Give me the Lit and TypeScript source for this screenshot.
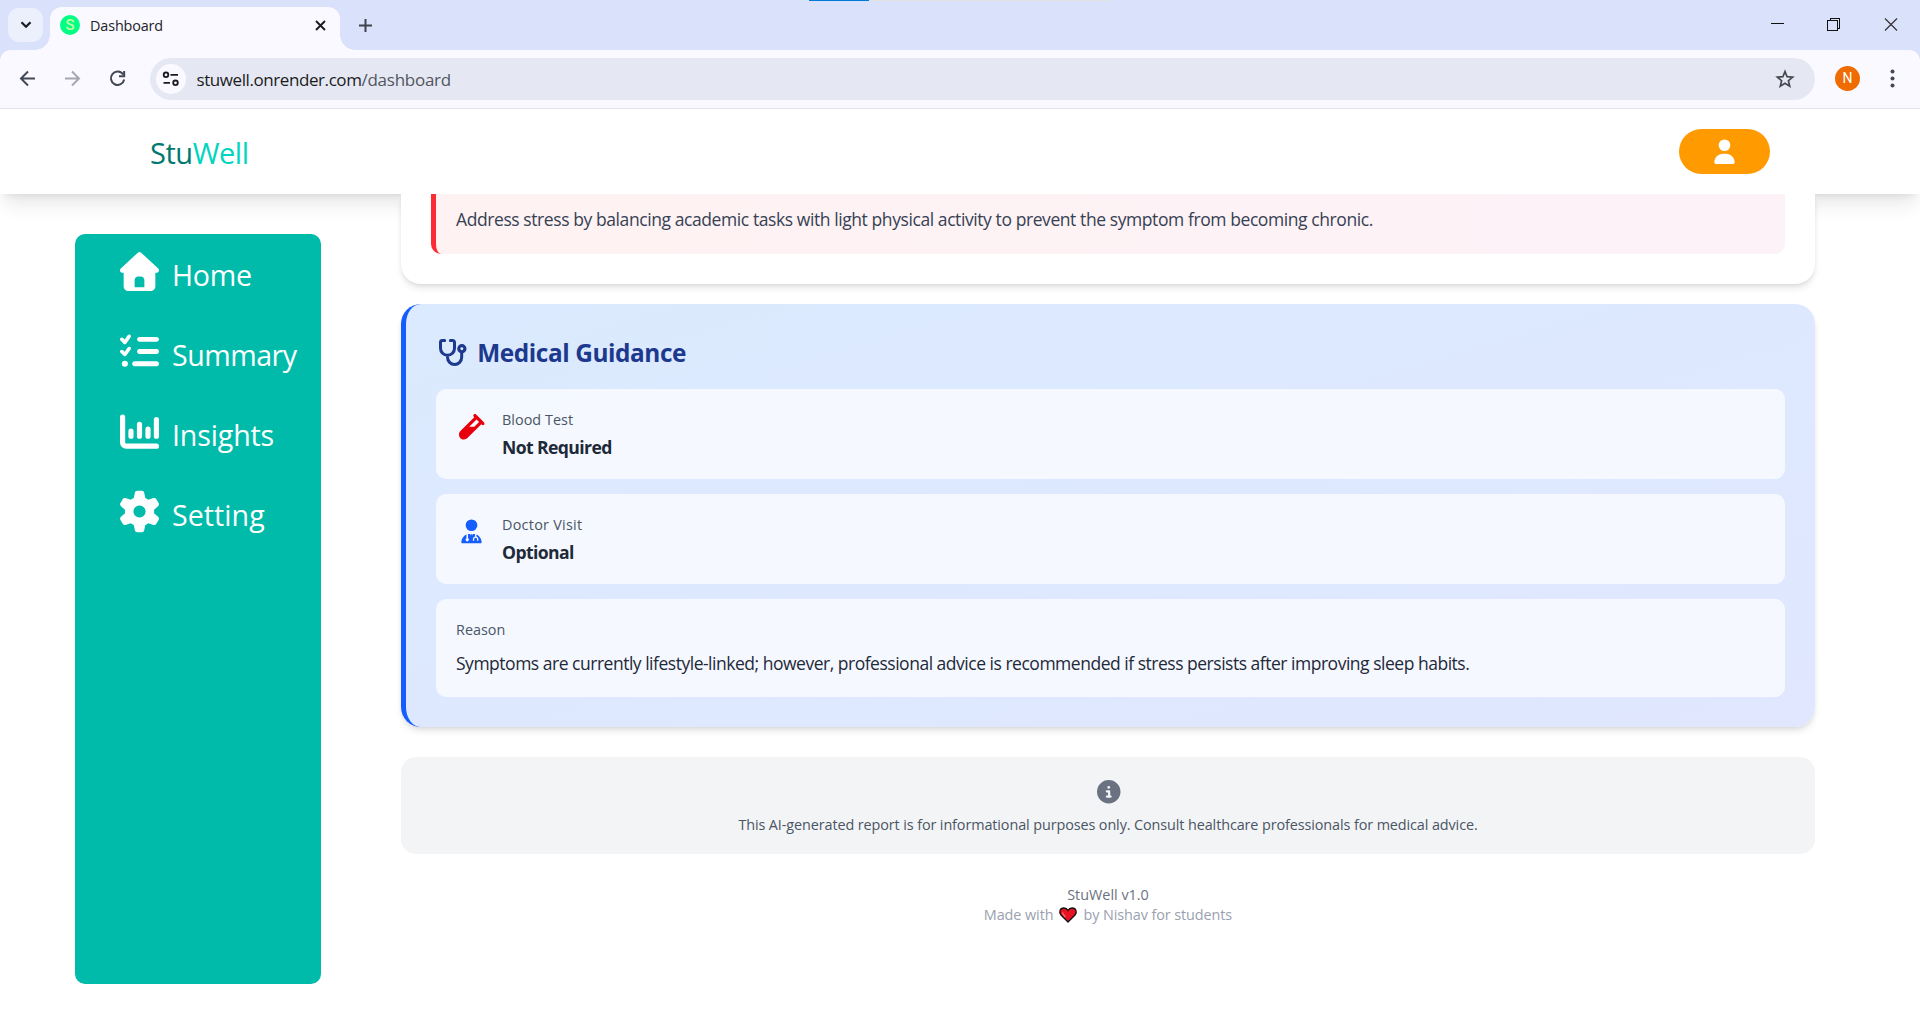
import { LitElement, html, css, svg } from "lit";
import { customElement } from "lit/decorators.js";

const house = svg`<path d="M277.8 8.6c-12.3-11.4-31.3-11.4-43.5 0l-224 208c-9.6 9-12.8 22.9-8 35.1S18.8 272 32 272l16 0 0 176c0 35.3 28.7 64 64 64l288 0c35.3 0 64-28.7 64-64l0-176 16 0c13.2 0 25-8.1 29.8-20.3s1.6-26.2-8-35.1l-224-208zM240 320l32 0c26.5 0 48 21.5 48 48l0 96-128 0 0-96c0-26.5 21.5-48 48-48z"/>`;
const list = svg`<path d="M133.8 36.3c10.9 7.6 13.5 22.6 5.9 33.4l-56 80c-4.1 5.8-10.5 9.5-17.6 10.1S52 158 47 153L7 113C-2.3 103.6-2.3 88.4 7 79S31.6 69.7 41 79l19.8 19.8 39.6-56.6c7.6-10.9 22.6-13.5 33.4-5.9zm0 160c10.9 7.6 13.5 22.6 5.9 33.4l-56 80c-4.1 5.8-10.5 9.5-17.6 10.1S52 318 47 313L7 273c-9.4-9.4-9.4-24.6 0-33.9s24.6-9.4 33.9 0l19.8 19.8 39.6-56.6c7.6-10.9 22.6-13.5 33.4-5.9zM224 96c0-17.7 14.3-32 32-32l224 0c17.7 0 32 14.3 32 32s-14.3 32-32 32l-224 0c-17.7 0-32-14.3-32-32zm0 160c0-17.7 14.3-32 32-32l224 0c17.7 0 32 14.3 32 32s-14.3 32-32 32l-224 0c-17.7 0-32-14.3-32-32zM160 416c0-17.7 14.3-32 32-32l288 0c17.7 0 32 14.3 32 32s-14.3 32-32 32l-288 0c-17.7 0-32-14.3-32-32zM64 376a40 40 0 1 1 0 80 40 40 0 1 1 0-80z"/>`;
const chart = svg`<path fill="none" stroke="currentColor" stroke-width="68" stroke-linecap="round" d="M34 66V400a48 48 0 0 0 48 48H478M144 252V318M256 162V318M368 224V318M478 98V318"/>`;
const gear = svg`<path d="M195.1 9.5C198.1-5.3 211.2-16 226.4-16l59.8 0c15.2 0 28.3 10.7 31.3 25.5L332 79.5c14.1 6 27.3 13.7 39.3 22.8l67.8-22.5c14.4-4.8 30.2 1.2 37.8 14.4l29.9 51.8c7.6 13.2 4.9 29.8-6.5 39.9L447 233.3c.9 7.4 1.3 15 1.3 22.7s-.5 15.3-1.3 22.7l53.4 47.5c11.4 10.1 14 26.8 6.5 39.9l-29.9 51.8c-7.6 13.1-23.4 19.2-37.8 14.4l-67.8-22.5c-12.1 9.1-25.3 16.7-39.3 22.8l-14.4 69.9c-3.1 14.9-16.2 25.5-31.3 25.5l-59.8 0c-15.2 0-28.3-10.7-31.3-25.5l-14.4-69.9c-14.1-6-27.2-13.7-39.3-22.8L73.5 432.3c-14.4 4.8-30.2-1.2-37.8-14.4L5.8 366.1c-7.6-13.2-4.9-29.8 6.5-39.9l53.4-47.5c-.9-7.4-1.3-15-1.3-22.7s.5-15.3 1.3-22.7L12.3 185.8c-11.4-10.1-14-26.8-6.5-39.9L35.7 94.1c7.6-13.2 23.4-19.2 37.8-14.4l67.8 22.5c12.1-9.1 25.3-16.7 39.3-22.8L195.1 9.5zM256.3 336a80 80 0 1 0 -.6-160 80 80 0 1 0 .6 160z"/>`;

const menu = [
  { label: "Home", icon: house, cls: "home" },
  { label: "Summary", icon: list, cls: "summary" },
  { label: "Insights", icon: chart, cls: "insights" },
  { label: "Setting", icon: gear, cls: "setting" },
];

@customElement("app-root")
export class AppRoot extends LitElement {
  static styles = css`
    :host { display: block; width: 1920px; height: 1028px; overflow: hidden; background: #fff;
      font-family: "Open Sans", "Noto Sans", sans-serif; }
    * { box-sizing: border-box; }
    svg { display: block; overflow: visible; flex: none; }
    .t { white-space: pre; }
    .strip { height: 50px; background: #dae1fa; display: flex; position: relative; }
    .chip { width: 35px; height: 34px; margin: 8px 7px 0 8px; border-radius: 11px; background: #ecf0fd; display: grid; place-items: center; }
    .tab { width: 290px; height: 43px; margin-top: 7px; padding: 0 14.5px 7px 10px; border-radius: 12px 12px 0 0; background: #faf9ff; position: relative; display: flex; align-items: center; }
    .tab::before, .tab::after { content: ""; position: absolute; bottom: 0; width: 15px; height: 15px; }
    .tab::before { left: -15px; background: radial-gradient(circle at 0 0, transparent 14.5px, #faf9ff 15px); }
    .tab::after { right: -15px; background: radial-gradient(circle at 100% 0, transparent 14.5px, #faf9ff 15px); }
    .fav { width: 20px; height: 20px; border-radius: 50%; background: #00ff84; color: #c4ff9e; display: grid; place-items: center; font: 500 15px/20px "Roboto", sans-serif; }
    .tabname { margin-left: 10px; padding-top: 1px; font-size: 14.4px; line-height: 20px; letter-spacing: -.14px; color: #22232a; flex: 1; }
    .plus { margin: 19px 0 0 19px; }
    .progress { position: absolute; left: 809px; top: 0; width: 301px; height: 1px; background: #e3e3e6; }
    .progress i { display: block; width: 60px; height: 1px; background: #0078d7; }
    .win { margin-left: auto; display: flex; }
    .bar { height: 59px; padding: 8px 20px 0 0; background: #faf9ff; border-bottom: 1px solid #e1e3ed; display: flex; align-items: flex-start; position: relative; }
    .bar::before, .bar::after { content: ""; position: absolute; top: 0; width: 10px; height: 10px; }
    .bar::before { left: 0; background: radial-gradient(circle at 100% 100%, transparent 9.5px, #dae1fa 10px); }
    .bar::after { right: 0; background: radial-gradient(circle at 0 100%, transparent 9.5px, #dae1fa 10px); }
    .nav { width: 150px; height: 42px; }
    .omni { width: 1665px; height: 42px; padding: 0 20px 0 6px; border-radius: 21px; background: #e5e8f3; display: flex; align-items: center; }
    .site { width: 30px; height: 30px; border-radius: 50%; background: #faf9ff; margin-right: 10.5px; }
    .url { flex: 1; display: flex; font-size: 17px; line-height: 24px; letter-spacing: -.42px; color: #1b1c22; padding-top: 1px; }
    .path { color: #52555e; letter-spacing: -.26px; }
    .avatar { width: 25px; height: 25px; margin: 8px 0 0 20px; border-radius: 50%; background: #ee6c02; color: #fff; font: 400 14px/25px "Roboto", sans-serif; text-align: center; }
    .dots { margin: 8px 0 0 28px; }
    .head { height: 85px; padding: 3px 150px 0 150px; display: flex; align-items: center; justify-content: space-between; background: #fff;
      box-shadow: 0 12.5px 18.75px -3.75px rgba(0,0,0,.1), 0 5px 7.5px -5px rgba(0,0,0,.1); }
    .logo { display: flex; font-size: 29px; line-height: 40px; letter-spacing: -.45px; color: #00786f; }
    .well { color: #00d5be; }
    .user { width: 91px; height: 45px; margin: -3px 0 0; border-radius: 22.5px; background: #ff9a00; display: grid; place-items: center; color: #fff; }
    .body { height: 834px; overflow: hidden; display: flex; align-items: flex-start; }
    .side { width: 246px; height: 750px; margin: 40px 80px 0 75px; padding-top: 1px; border-radius: 10px; background: #00bba9; color: #fff; }
    .item { height: 80px; padding-left: 44.5px; display: flex; align-items: center; font-size: 28.6px; line-height: 40px; }
    .item svg { margin: -7px 13.5px 0 0; }
    .home { letter-spacing: -.25px; }
    .summary { letter-spacing: -.5px; }
    .insights { letter-spacing: -.15px; }
    .setting { letter-spacing: .05px; }
    .main { width: 1414px; }
    .tip { height: 90px; padding: 0 30px 30px; border-radius: 0 0 20px 20px; background: #fff; box-shadow: 0 5px 7.5px -1.25px rgba(0,0,0,.1), 0 2.5px 5px -2.5px rgba(0,0,0,.1); }
    .tipin { width: 1354px; height: 60px; padding: 12px 0 0 20px; border-left: 5px solid #fb2c36; border-radius: 0 0 10px 10px; background: linear-gradient(90deg, #fef2f2, #fdf2f8); color: #364153; font-size: 17.5px; line-height: 26px; letter-spacing: -.416px; }
    .med { height: 423px; margin-top: 20px; padding: 30px 30px 0; border-left: 5px solid #155dfc; border-radius: 20px; background: linear-gradient(to bottom right, #dbeafe, #e0e7ff); box-shadow: 0 5px 7.5px -1.25px rgba(0,0,0,.1), 0 2.5px 5px -2.5px rgba(0,0,0,.1); display: flex; flex-direction: column; gap: 15px; }
    .title { height: 40px; display: flex; align-items: center; color: #1c398e; font-size: 24.4px; font-weight: 700; line-height: 35px; letter-spacing: -.42px; padding: 0 0 4px 3px; }
    .title svg { margin: 1px 10.5px 0 0; }
    .box { height: 90px; border-radius: 10px; background: rgba(255,255,255,.7); padding: 0 20px; display: flex; }
    .ico { width: 30px; height: 30px; margin: 22.5px 15px 0 1px; display: grid; place-items: center; }
    .red { color: #e7000b; }
    .blue { margin: 22.5px 16px 0 0; color: #155dfc; }
    .lab { font-size: 14.4px; line-height: 20px; font-weight: 500; color: #4a5565; padding-top: 21px; }
    .blood { letter-spacing: .03px; }
    .doctor { letter-spacing: .26px; }
    .val { font-size: 17.6px; line-height: 25px; font-weight: 700; letter-spacing: -.6px; color: #1e2939; padding-top: 5px; }
    .reason { height: 98px; display: block; }
    .txt { font-size: 17.5px; line-height: 26px; letter-spacing: -.484px; color: #1e2939; padding-top: 10px; margin-top: -.5px; }
    .note { height: 97px; margin-top: 30px; border-radius: 15px; background: #f3f4f6; display: flex; flex-direction: column; align-items: center; padding-top: 23px; color: #6a7282; }
    .info { margin-left: 1px; }
    .disc { font-size: 14.4px; line-height: 20px; letter-spacing: -.1px; color: #4a5565; margin-top: 11px; }
    .foot { margin-top: 31px; display: flex; flex-direction: column; align-items: center; font-size: 14.4px; line-height: 20px; color: #6a7282; }
    .made { display: flex; align-items: center; color: #99a1af; letter-spacing: -.08px; }
    .heart { margin: 0 6px; }
  `;

  render() {
    return html`
      <div class="strip">
        <div class="chip"><svg width="12" height="8" viewBox="0 0 12 8" fill="none" stroke="#1b1c22" stroke-width="2.2"><path d="M1.5 1.2 6 5.8 10.5 1.2"/></svg></div>
        <div class="tab">
          <div class="fav">S</div>
          <span class="tabname t">Dashboard</span>
          <svg width="11" height="11" viewBox="0 0 11 11" stroke="#1b1c22" stroke-width="1.9"><path d="M1 1 10 10M10 1 1 10"/></svg>
        </div>
        <svg class="plus" width="13" height="13" viewBox="0 0 13 13" stroke="#3f434e" stroke-width="2"><path d="M6.5 0V13M0 6.5H13"/></svg>
        <div class="progress"><i></i></div>
        <svg class="win" width="156" height="50" viewBox="0 0 156 50" fill="none" shape-rendering="crispEdges">
          <path d="M7 23.5H20" stroke="#111" stroke-width="1"/>
          <path d="M63.5 20.5H73.5V30.5H63.5ZM66 20V18.5H75.5V28.5H74" stroke="#111"/>
          <path d="M121 18.5 133 30.5M133 18.5 121 30.5" stroke="#333" stroke-width="1.2" shape-rendering="auto"/>
        </svg>
      </div>
      <div class="bar">
        <svg class="nav" viewBox="0 0 150 42" fill="none" stroke-width="2">
          <path d="M35 20.5H21.5M28 13.5 21 20.5 28 27.5" stroke="#434855"/>
          <path d="M65 20.5H78.5M72 13.5 79 20.5 72 27.5" stroke="#a5a7ae"/>
          <path d="M123.2 16.5A6.7 6.7 0 1 0 124.2 21.5M124.2 13V18.2H119" stroke="#434855"/>
        </svg>
        <div class="omni">
          <svg class="site" viewBox="0 0 30 30" fill="none" stroke="#1b1c22" stroke-width="1.8"><circle cx="10" cy="10.8" r="2.3"/><path d="M14.5 10.8H22M7.5 18.8H14"/><circle cx="19.5" cy="18.8" r="2.3"/></svg>
          <div class="url"><span class="t">stuwell.onrender.com</span><span class="path t">/dashboard</span></div>
          <svg width="20" height="20" viewBox="0 0 20 20" fill="none" stroke="#44474f" stroke-width="1.7"><path d="M10 2.6 12.1 7.7 17.6 8.1 13.4 11.7 14.7 17.1 10 14.2 5.3 17.1 6.6 11.7 2.4 8.1 7.9 7.7Z"/></svg>
        </div>
        <div class="avatar">N</div>
        <svg class="dots" width="10" height="25" viewBox="0 0 10 25" fill="#434855"><circle cx="4.5" cy="5.5" r="2"/><circle cx="4.5" cy="12.5" r="2"/><circle cx="4.5" cy="19.5" r="2"/></svg>
      </div>
      <div class="head">
        <div class="logo"><span class="t">Stu</span><span class="well t">Well</span></div>
        <div class="user"><svg width="25" height="25" viewBox="0 0 512 512" fill="currentColor"><path d="M256 248a120 120 0 1 0 0-240 120 120 0 1 0 0 240zm-29.7 56C127.8 304 48 383.8 48 482.3 48 498.7 61.3 512 77.7 512l356.6 0c16.4 0 29.7-13.3 29.7-29.7 0-98.5-79.8-178.3-178.3-178.3l-59.4 0z"/></svg></div>
      </div>
      <div class="body">
        <div class="side">
          ${menu.map((m) => html`<div class="item"><svg width="39" height="39" viewBox="0 0 512 512" fill="currentColor">${m.icon}</svg><span class="t ${m.cls}">${m.label}</span></div>`)}
        </div>
        <div class="main">
          <div class="tip"><div class="tipin"><span class="t">Address stress by balancing academic tasks with light physical activity to prevent the symptom from becoming chronic.</span></div></div>
          <div class="med">
            <div class="title">
              <svg width="27.7" height="26.7" viewBox="0 0 83 80" fill="none" stroke="currentColor"><path stroke-width="9" stroke-linecap="round" d="M17 4.5H10A5.5 5.5 0 0 0 4.5 10V28A21 21 0 0 0 46.5 28V10A5.5 5.5 0 0 0 41 4.5H34M25.5 50V55A21 21 0 0 0 68 55V40"/><circle cx="68.5" cy="29" r="9.2" stroke-width="9.5"/></svg>
              <span class="t">Medical Guidance</span>
            </div>
            <div class="box">
              <div class="ico red"><svg width="25.5" height="25.5" viewBox="0 0 512 512" fill="currentColor"><path fill-rule="evenodd" d="M342.6 9.4c-12.5-12.5-32.8-12.5-45.3 0s-12.5 32.8 0 45.3l9.4 9.4L28.1 342.6C10.1 360.6 0 385 0 410.5V416c0 53 43 96 96 96h5.5c25.5 0 49.9-10.1 67.9-28.1L448 205.3l9.4 9.4c12.5 12.5 32.8 12.5 45.3 0s12.5-32.8 0-45.3l-32-32-96-96-32-32zM205.3 256L352 109.3 402.7 160l-96 96H205.3z"/></svg></div>
              <div><div class="lab"><span class="t blood">Blood Test</span></div><div class="val"><span class="t">Not Required</span></div></div>
            </div>
            <div class="box">
              <div class="ico blue"><svg width="25" height="25" viewBox="0 0 512 512" fill="currentColor"><path fill-rule="evenodd" d="M256 248a120 120 0 1 0 0-240 120 120 0 1 0 0 240zM48 482C48 410 92 344 153 318V394A33 33 0 1 0 185 394V306H231L240 338 256 304 272 338 281 306H327V360A56 56 0 0 0 283 414V446H311V414A28 28 0 0 1 369 414V446H397V414A56 56 0 0 0 357 360V318C420 344 464 410 464 482Q464 496 450 496H62Q48 496 48 482Z"/></svg></div>
              <div><div class="lab"><span class="t doctor">Doctor Visit</span></div><div class="val"><span class="t">Optional</span></div></div>
            </div>
            <div class="box reason"><div class="lab"><span class="t">Reason</span></div><div class="txt"><span class="t">Symptoms are currently lifestyle-linked; however, professional advice is recommended if stress persists after improving sleep habits.</span></div></div>
          </div>
          <div class="note">
            <svg class="info" width="23.5" height="23.5" viewBox="0 0 512 512" fill="currentColor"><path fill-rule="evenodd" d="M256 512a256 256 0 1 0 0-512 256 256 0 1 0 0 512zM224 160a32 32 0 1 1 64 0 32 32 0 1 1-64 0zm-8 64l48 0c13.3 0 24 10.7 24 24l0 88 8 0c13.3 0 24 10.7 24 24s-10.7 24-24 24l-80 0c-13.3 0-24-10.7-24-24s10.7-24 24-24l24 0 0-64-24 0c-13.3 0-24-10.7-24-24s10.7-24 24-24z"/></svg>
            <div class="disc"><span class="t">This AI-generated report is for informational purposes only. Consult healthcare professionals for medical advice.</span></div>
          </div>
          <div class="foot">
            <div><span class="t">StuWell v1.0</span></div>
            <div class="made"><span class="t">Made with</span><svg class="heart" width="18" height="16" viewBox="0 0 18 16"><path d="M9 15 2 8C-.5 5 1 1 4.8 1 7 1 8.3 2.2 9 3.5 9.7 2.2 11 1 13.2 1 17 1 18.5 5 16 8Z" fill="#e81224" stroke="#111" stroke-width="1.3"/><path d="M3.5 5.5Q4 8 6.5 10" fill="none" stroke="#f9705f" stroke-width="1.3"/></svg><span class="t">by Nishav for students</span></div>
          </div>
        </div>
      </div>
    `;
  }
}
